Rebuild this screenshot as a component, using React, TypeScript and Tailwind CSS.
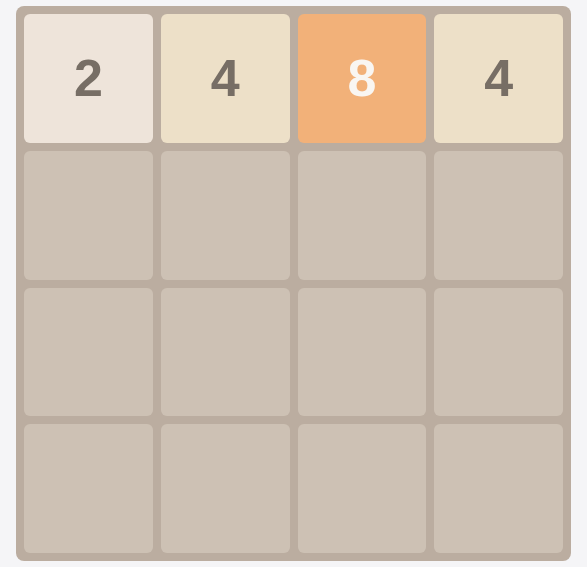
const board: (number | null)[][] = [
  [2, 4, 8, 4],
  [null, null, null, null],
  [null, null, null, null],
  [null, null, null, null],
];

function tileClass(value: number | null) {
  switch (value) {
    case 2:
      return 'bg-[#eee4da] text-[#776e65]';
    case 4:
      return 'bg-[#ede0c8] text-[#776e65]';
    case 8:
      return 'bg-[#f2b179] text-[#f9f6f2]';
    default:
      return 'bg-[#cdc1b4]';
  }
}

export default function App() {
  return (
    <div className="min-h-screen bg-[#f5f5f7] pl-4 pt-1.5 font-['Liberation_Sans',Arial,sans-serif]">
      <div className="grid h-[555px] w-[555px] grid-cols-4 grid-rows-4 gap-2 rounded-lg bg-[#bbada0] p-2">
        {board.flat().map((value, i) => (
          <div
            key={i}
            className={`flex items-center justify-center rounded-md text-[52px] font-bold leading-none ${tileClass(value)}`}
          >
            {value ?? ''}
          </div>
        ))}
      </div>
    </div>
  );
}
